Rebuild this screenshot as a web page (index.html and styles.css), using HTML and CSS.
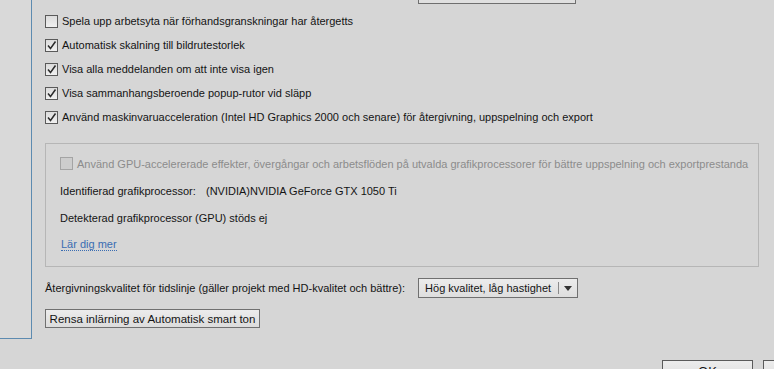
FILE: index.html
```html
<!DOCTYPE html>
<html lang="sv">
<head>
  <meta charset="UTF-8" />
  <title>Inställningar</title>
  <link rel="stylesheet" href="styles.css">
</head>
<body>
  <div class="window">
    <div class="content">
      <aside class="sidebar"></aside>

      <main class="prefs">
        <div class="top-btn"></div>

        <ul class="checks">
          <li class="check"><span class="box"></span>Spela upp arbetsyta när förhandsgranskningar har återgetts</li>
          <li class="check"><span class="box on"><svg viewBox="0 0 11 11"><path d="M2 5.5 L4.5 8.5 L9.5 1.5" /></svg></span>Automatisk skalning till bildrutestorlek</li>
          <li class="check"><span class="box on"><svg viewBox="0 0 11 11"><path d="M2 5.5 L4.5 8.5 L9.5 1.5" /></svg></span>Visa alla meddelanden om att inte visa igen</li>
          <li class="check"><span class="box on"><svg viewBox="0 0 11 11"><path d="M2 5.5 L4.5 8.5 L9.5 1.5" /></svg></span>Visa sammanhangsberoende popup-rutor vid släpp</li>
          <li class="check"><span class="box on"><svg viewBox="0 0 11 11"><path d="M2 5.5 L4.5 8.5 L9.5 1.5" /></svg></span>Använd maskinvaruacceleration (Intel HD Graphics 2000 och senare) för återgivning, uppspelning och export</li>
        </ul>

        <div class="gpu">
          <div class="gpu-row check disabled"><span class="box"></span>Använd GPU-accelererade effekter, övergångar och arbetsflöden på utvalda grafikprocessorer för bättre uppspelning och exportprestanda</div>
          <div class="gpu-row"><span class="gpu-label">Identifierad grafikprocessor:</span>(NVIDIA)NVIDIA GeForce GTX 1050 Ti</div>
          <div class="gpu-row">Detekterad grafikprocessor (GPU) stöds ej</div>
          <div class="gpu-row"><a class="link" href="#">Lär dig mer</a></div>
        </div>

        <div class="quality">
          <span class="quality-label">Återgivningskvalitet för tidslinje (gäller projekt med HD-kvalitet och bättre):</span>
          <div class="select">
            <span class="select-text">Hög kvalitet, låg hastighet</span>
            <span class="select-sep"></span>
            <span class="select-arrow"></span>
          </div>
        </div>

        <button class="btn reset">Rensa inlärning av Automatisk smart ton</button>
      </main>
    </div>

    <div class="footer">
      <button class="btn ok">OK</button>
      <button class="btn cancel">Avbryt</button>
    </div>
  </div>
</body>
</html>
```

FILE: styles.css
```css
body {
  margin: 0;
  width: 774px;
  height: 369px;
  overflow: hidden;
  background: #d6d6d6;
  font-family: 'Liberation Sans', Arial, sans-serif;
  font-size: 11px;
  color: #141414;
}
.window {
  display: flex;
  flex-direction: column;
}
.content {
  display: flex;
  height: 339px;
}
.sidebar {
  width: 32px;
  height: 339px;
  box-sizing: border-box;
  border-right: 1px solid #5d8bb0;
  border-bottom: 1px solid #5d8bb0;
  background: #d9d9d9;
}
.prefs {
  flex: 1;
  padding-left: 13px;
}
.top-btn {
  margin-left: 373px;
  width: 158px;
  height: 4px;
  box-sizing: border-box;
  border: 1px solid #6f6f6f;
  border-top: none;
  background: #e0e0e0;
}
.checks {
  list-style: none;
  margin: 5px 0 0;
  padding: 0;
}
.check {
  display: flex;
  align-items: center;
  height: 24px;
  white-space: nowrap;
}
.box {
  width: 13px;
  height: 13px;
  box-sizing: border-box;
  margin-right: 4px;
  border: 1px solid #5a5a5a;
  background: linear-gradient(#dcdcdc, #f0f0f0);
  display: flex;
  align-items: center;
  justify-content: center;
}
.box svg {
  width: 11px;
  height: 11px;
}
.box path {
  fill: none;
  stroke: #2a2a2a;
  stroke-width: 1.5;
}
.check.disabled {
  color: #8c8c8c;
}
.check.disabled .box {
  border-color: #a4a4a4;
  background: #cdcdcd;
}
.gpu {
  margin-top: 14px;
  width: 714px;
  box-sizing: border-box;
  border: 1px solid #b6b6b6;
  padding: 6px 0 8px 14px;
}
.gpu-row {
  display: flex;
  align-items: center;
  height: 27px;
  white-space: nowrap;
}
.gpu-label {
  width: 146px;
}
.link {
  margin-left: 1px;
  color: #3a6db2;
  text-decoration: none;
  border-bottom: 1px dotted #3a6db2;
}
.quality {
  display: flex;
  align-items: center;
  gap: 13px;
  margin-top: 10px;
  height: 22px;
  white-space: nowrap;
}
.select {
  display: flex;
  align-items: center;
  width: 160px;
  height: 20px;
  box-sizing: border-box;
  border: 1px solid #707070;
  background: linear-gradient(#ececec, #dedede);
}
.select-text {
  flex: 1;
  padding-left: 6px;
  font-size: 11px;
}
.select-sep {
  width: 1px;
  height: 12px;
  background: #8a8a8a;
}
.select-arrow {
  width: 18px;
  height: 100%;
  display: flex;
  align-items: center;
  justify-content: center;
}
.select-arrow::after {
  content: "";
  border-left: 4px solid transparent;
  border-right: 4px solid transparent;
  border-top: 5px solid #333;
}
.btn {
  font-family: inherit;
  font-size: 11.5px;
  color: #141414;
  border: 1px solid #707070;
  background: linear-gradient(#ececec, #dcdcdc);
  padding: 0;
  white-space: nowrap;
}
.reset {
  display: block;
  margin-top: 10px;
  width: 215px;
  height: 19px;
}
.footer {
  display: flex;
  gap: 10px;
  padding: 21px 0 0 662px;
}
.ok, .cancel {
  flex: none;
  width: 91px;
  height: 22px;
  border-color: #5a5a5a;
  font-size: 13px;
}
```
